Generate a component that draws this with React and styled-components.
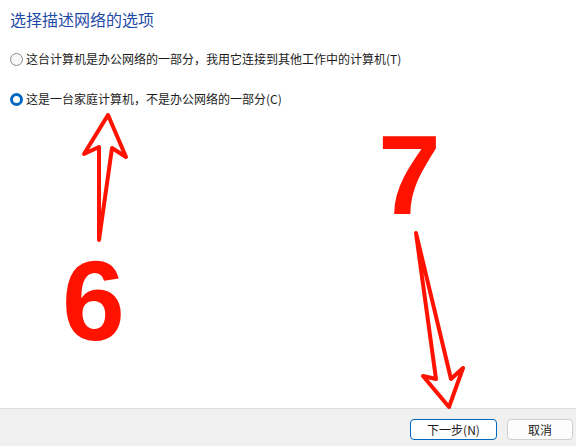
import styled, { createGlobalStyle } from "styled-components"

const GlobalStyle = createGlobalStyle`
  html, body {
    margin: 0;
    padding: 0;
    background: #ffffff;
  }
  body {
    font-family: "Noto Sans CJK SC", "Liberation Sans", sans-serif;
    color: #1b1b1b;
  }
`

const options = [
  { id: "work", label: "这台计算机是办公网络的一部分，我用它连接到其他工作中的计算机(T)", checked: false },
  { id: "home", label: "这是一台家庭计算机，不是办公网络的一部分(C)", checked: true },
]

const App = () => {
  return (
    <Page>
      <GlobalStyle />
      <Content>
        <Title>选择描述网络的选项</Title>
        <OptionList>
          {options.map((opt) => (
            <Option key={opt.id}>
              <Radio $checked={opt.checked} />
              <OptionText>{opt.label}</OptionText>
            </Option>
          ))}
        </OptionList>
      </Content>

      <Footer>
        <Button $primary>下一步(N)</Button>
        <Button $width={66}>取消</Button>
      </Footer>

      <Marks width="576" height="446" viewBox="0 0 576 446">
        <polygon
          points="99,240 99,147 84,154 108,115 126,157 112,148"
          fill="none"
          stroke="#ff1200"
          strokeWidth="4"
          strokeLinejoin="round"
          strokeLinecap="round"
        />
        <polygon
          points="416,233 436,379 423,376 449,407 463,368 451,379"
          fill="none"
          stroke="#ff1200"
          strokeWidth="4"
          strokeLinejoin="round"
          strokeLinecap="round"
        />
      </Marks>
      <Callout $x={62} $y={245}>6</Callout>
      <Callout $x={378} $y={119}>7</Callout>
    </Page>
  )
}

const Page = styled.div`
  position: relative;
  width: 576px;
  height: 446px;
  display: flex;
  flex-direction: column;
  overflow: hidden;
  background: #ffffff;
`

const Content = styled.main`
  flex: 1;
  padding: 8px 10px 0 10px;
`

const Title = styled.h1`
  margin: 0;
  font-size: 16px;
  line-height: 22px;
  font-weight: 400;
  color: #1f4ba6;
`

const OptionList = styled.div`
  display: flex;
  flex-direction: column;
  gap: 24px;
  margin-top: 21px;
`

const Option = styled.label`
  display: flex;
  align-items: center;
  gap: 3px;
  height: 16px;
  font-size: 12px;
  line-height: 16px;
`

const Radio = styled.span`
  box-sizing: border-box;
  width: 13px;
  height: 13px;
  border-radius: 50%;
  flex-shrink: 0;
  border: ${(p) => (p.$checked ? "3.5px solid #0067c0" : "1px solid #8a8a8a")};
  background: ${(p) => (p.$checked ? "#ffffff" : "#f7f7f7")};
`

const OptionText = styled.span`
  white-space: nowrap;
`

const Footer = styled.footer`
  height: 37px;
  border-top: 1px solid #dcdcdc;
  background: #f0f0f0;
  display: flex;
  justify-content: flex-end;
  align-items: flex-start;
  gap: 10px;
  padding: 10px 3px 0 0;
  box-sizing: border-box;
  height: 38px;
`

const Button = styled.button`
  width: ${(p) => p.$width || 87}px;
  height: 21px;
  padding: 0;
  border-radius: 4px;
  border: 1px solid ${(p) => (p.$primary ? "#0067c0" : "#cfcfcf")};
  background: ${(p) => (p.$primary ? "#ffffff" : "#fdfdfd")};
  font-family: "Noto Sans CJK SC", "Liberation Sans", sans-serif;
  font-size: 12px;
  line-height: 19px;
  color: #1b1b1b;
`

const Marks = styled.svg`
  position: absolute;
  left: 0;
  top: 0;
  pointer-events: none;
`

const Callout = styled.span`
  position: absolute;
  left: ${(p) => p.$x}px;
  top: ${(p) => p.$y}px;
  font-family: "Liberation Sans", Arial, sans-serif;
  font-weight: 700;
  font-size: 113px;
  line-height: 1;
  color: #ff1200;
`

export default App
